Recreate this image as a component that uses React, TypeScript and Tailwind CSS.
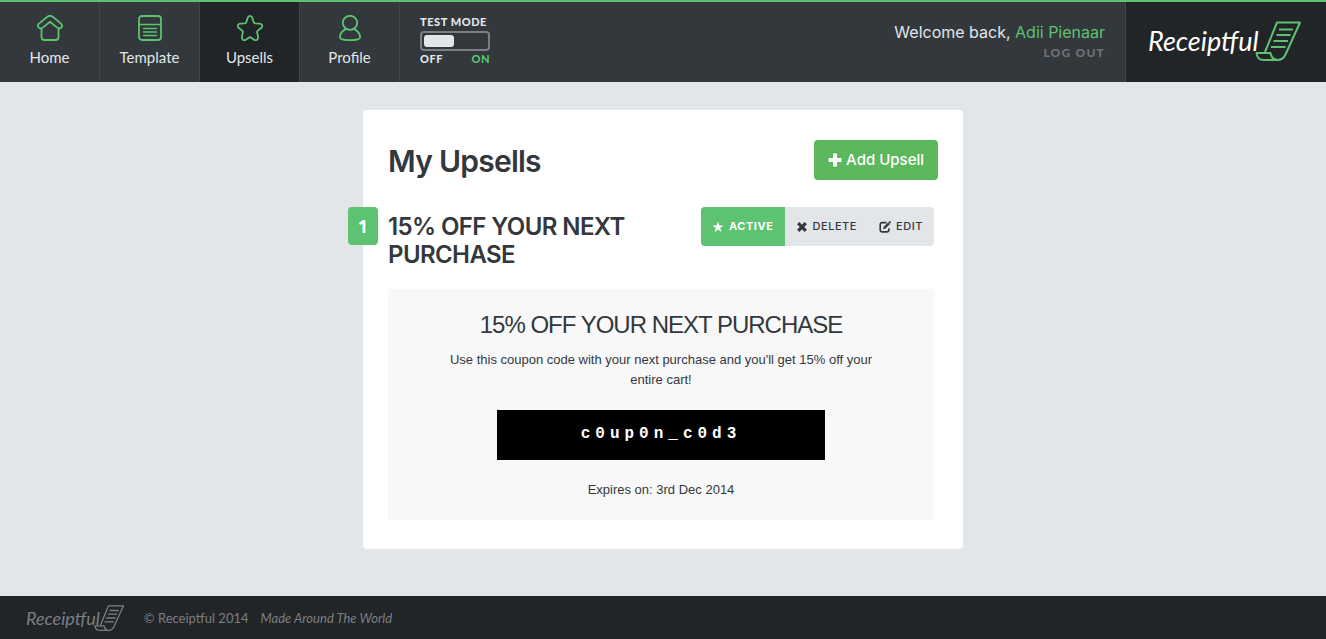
import React from "react";

const iconProps = {
  width: 26,
  height: 26,
  viewBox: "0 0 26 26",
  fill: "none",
  stroke: "currentColor",
  strokeWidth: 1.8,
  strokeLinecap: "round" as const,
  strokeLinejoin: "round" as const,
  "aria-hidden": true,
};

function HomeIcon() {
  return (
    <svg {...iconProps}>
      <path d="M10.300 1.800Q13 -0.200 15.700 1.800L24 8.600Q26 10.600 24.400 12.400Q22.600 14.400 20.200 12.600L13 6.800L5.800 12.600Q3.400 14.400 1.600 12.400Q0 10.600 2 8.600Z" />
      <path d="M4.500 13.500V22Q4.500 25 7.500 25H18.500Q21.500 25 21.500 22V13.500" />
    </svg>
  );
}

function TemplateIcon() {
  return (
    <svg {...iconProps}>
      <rect x="2" y="1" width="22" height="24" rx="3" />
      <path d="M2 9.500H24M6.500 13.500H19.500M6.500 17H19.500M6.500 20.500H19.500" strokeWidth={1.4} />
    </svg>
  );
}

function StarIcon() {
  return (
    <svg {...iconProps}>
      <path d="M10.800 2.400Q13 -0.600 15.200 2.400L16.800 7.400Q17.200 8.300 18.200 8.400L22.800 8.600Q27 9.800 24.400 12.800L20.600 15.900Q19.900 16.500 20.100 17.400L21.200 22Q21 26.200 17.200 24.800L13.900 22.500Q13 22 12.100 22.500L8.800 24.800Q5 26.200 4.800 22L5.900 17.400Q6.100 16.500 5.400 15.900L1.600 12.800Q-1 9.800 3.200 8.600L7.800 8.400Q8.800 8.300 9.200 7.400Z" />
    </svg>
  );
}

function ProfileIcon() {
  return (
    <svg {...iconProps}>
      <ellipse cx="13" cy="7.800" rx="7.200" ry="7" />
      <path d="M9.200 13.900C5.500 15.700 3 19 2.800 22.300Q2.700 25.200 13 25.200T23.200 22.300C23 19 20.500 15.700 16.800 13.900" />
    </svg>
  );
}

function PlusIcon() {
  return (
    <svg viewBox="0 0 14 14" className="size-3.5" stroke="currentColor" strokeWidth="4" aria-hidden="true">
      <path d="M7 0.500V13.500M0.500 7H13.500" />
    </svg>
  );
}

function SolidStarIcon() {
  return (
    <svg viewBox="0 0 12 12" className="size-3" fill="currentColor" aria-hidden="true">
      <path d="M6 0.600L7.400 4.500H11.600L8.200 7L9.500 11.100L6 8.600L2.500 11.100L3.800 7L0.400 4.500H4.600Z" />
    </svg>
  );
}

function CrossIcon() {
  return (
    <svg viewBox="0 0 12 12" className="size-3" stroke="currentColor" strokeWidth="3.200" aria-hidden="true">
      <path d="M2.200 2.200L9.800 9.800M9.800 2.200L2.200 9.800" />
    </svg>
  );
}

function EditIcon() {
  return (
    <svg viewBox="0 0 12 12" className="size-3" fill="none" stroke="currentColor" strokeWidth="1.600" aria-hidden="true">
      <path d="M7.500 1.600H3.300Q1.200 1.600 1.200 3.700V8.800Q1.200 10.900 3.300 10.900H7.800Q9.900 10.900 9.900 8.800V7.200" />
      <path d="M4 8.200L4.700 5.700L9.300 1.200L11 2.900L6.500 7.500Z" fill="currentColor" stroke="none" />
      <path d="M10.200 0.400L11.700 1.900" />
    </svg>
  );
}

const navItems = [
  { label: "Home", Icon: HomeIcon, active: false },
  { label: "Template", Icon: TemplateIcon, active: false },
  { label: "Upsells", Icon: StarIcon, active: true },
  { label: "Profile", Icon: ProfileIcon, active: false },
];

function ReceiptMark({ className }: { className: string }) {
  return (
    <svg viewBox="0 0 46 40" fill="none" stroke="currentColor" strokeWidth="2" strokeLinejoin="round" className={className} aria-hidden="true">
      <path d="M10 31L22 1.500H45L30.500 33.500Q28 39 22.500 39H9Q2 39 1.500 32H15.500Q16.500 38.500 22.500 39" />
      <path d="M24 8.500H38M21.500 14H35.500M18.500 20H33M16 26H30.500" />
    </svg>
  );
}

function Header() {
  return (
    <header className="flex h-[82px] border-t-2 border-[#5dc271] bg-[#33383c] font-[Lato,sans-serif] text-[#e2e6e9]">
      <nav className="flex">
        {navItems.map(({ label, Icon, active }) => (
          <a
            key={label}
            href="#"
            className={
              active
                ? "flex w-[100px] flex-col items-center gap-1 border-r border-[#42474b] bg-[#222528] pt-[13px] text-[15px] leading-6"
                : "flex w-[100px] flex-col items-center gap-1 border-r border-[#42474b] pt-[13px] text-[15px] leading-6"
            }
          >
            <span className="h-[26px] text-[#5dc271]">
              <Icon />
            </span>
            {label}
          </a>
        ))}
      </nav>
      <div className="ml-5 flex w-[70px] flex-col pt-3.5 text-[11px] leading-3 font-black tracking-wider whitespace-nowrap">
        <label htmlFor="test-mode">TEST MODE</label>
        <input
          id="test-mode"
          type="checkbox"
          className="mt-[3px] mb-0.5 h-5 w-full appearance-none rounded border-2 border-[#7a7f83] p-0.5 before:block before:h-3 before:w-[30px] before:rounded-[3px] before:bg-[#e2e6e9] checked:before:ml-auto"
        />
        <div className="flex justify-between">
          <span>OFF</span>
          <span className="text-[#5dc271]">ON</span>
        </div>
      </div>
      <div className="ml-auto flex flex-col items-end pt-[19px] pr-5">
        <p className="font-[Inter,sans-serif] text-[16px] leading-[22px]">
          Welcome back,{" "}
          <a href="#" className="text-[#5dc271]">
            Adii Pienaar
          </a>
        </p>
        <a href="#" className="text-[12px] leading-5 font-black tracking-widest text-[#6d7276]">
          LOG OUT
        </a>
      </div>
      <a href="#" className="flex w-[201px] border-l border-[#42474b] bg-[#222528] pt-[19px] pl-[22px]">
        <span className="text-[27px] leading-10 text-white italic">Receiptful</span>
        <ReceiptMark className="-ml-1 h-10 w-[46px] text-[#5dc271]" />
      </a>
    </header>
  );
}

export default function App() {
  return (
    <div className="flex min-h-screen flex-col bg-[#e2e6e9] font-[Inter,sans-serif] text-[#33383d]">
      <Header />
      <main className="flex-1 px-4 pt-7 pb-[47px]">
        <section className="mx-auto max-w-[600px] rounded bg-white px-[25px] pt-[30px] pb-[29px]">
          <div className="flex items-start justify-between">
            <h1 className="text-[30px] leading-[42px] font-semibold tracking-tight">My Upsells</h1>
            <button className="flex h-10 items-center gap-1 rounded bg-[#5cb85c] px-3.5 text-[15px] font-medium text-white">
              <PlusIcon />
              Add Upsell
            </button>
          </div>
          <article className="relative mt-[25px] mr-1">
            <span className="absolute top-0 -left-10 flex h-[38px] w-[30px] items-center justify-center rounded bg-[#5dc271] font-['Noto_Sans',sans-serif] text-[18px] font-bold text-white">
              1
            </span>
            <div className="flex items-start justify-between">
              <h2 className="w-[260px] pt-1.5 text-[24px] leading-7 font-semibold tracking-tight">15% OFF YOUR NEXT PURCHASE</h2>
              <div className="flex h-[39px] overflow-hidden rounded bg-[#e2e6e9] text-[11px] font-medium tracking-wider">
                <button className="flex items-center gap-[5px] bg-[#5dc271] px-[11px] font-bold text-white">
                  <SolidStarIcon />
                  ACTIVE
                </button>
                <button className="flex items-center gap-[5px] px-[11px]">
                  <CrossIcon />
                  DELETE
                </button>
                <button className="flex items-center gap-[5px] px-[11px]">
                  <EditIcon />
                  EDIT
                </button>
              </div>
            </div>
            <div className="mt-5 bg-[#f8f8f8] px-[50px] pt-[21px] pb-5 text-center font-['Liberation_Sans',sans-serif] text-[13px] leading-5">
              <h3 className="text-[24px] leading-[30px] tracking-[-1px]">15% OFF YOUR NEXT PURCHASE</h3>
              <p className="mt-2.5">Use this coupon code with your next purchase and you'll get 15% off your entire cart!</p>
              <p className="mx-auto my-5 h-[50px] w-3/5 min-w-[328px] bg-black font-['Liberation_Mono',monospace] text-[16px] leading-[48px] font-bold tracking-[5px] text-white">
                c0up0n_c0d3
              </p>
              <p>Expires on: 3rd Dec 2014</p>
            </div>
          </article>
        </section>
      </main>
      <footer className="flex h-[43px] items-center bg-[#222528] pl-[26px] font-[Lato,sans-serif] text-[13px] text-[#7a7f83]">
        <a href="#" className="flex">
          <span className="text-[18px] leading-7 italic">Receiptful</span>
          <ReceiptMark className="-ml-1.5 h-7 w-[30px]" />
        </a>
        <span className="ml-5 pt-0.5">© Receiptful 2014</span>
        <em className="ml-3 pt-0.5">Made Around The World</em>
      </footer>
    </div>
  );
}
